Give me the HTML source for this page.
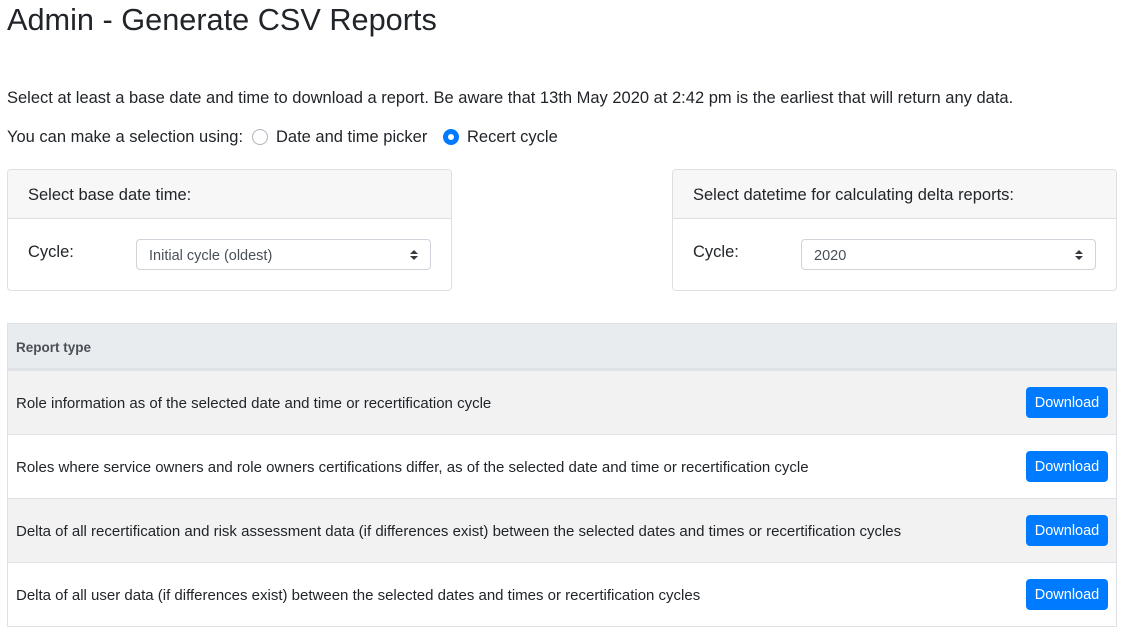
<!DOCTYPE html>
<html><head><style>
*{box-sizing:border-box;margin:0;padding:0}
body{width:1125px;height:634px;overflow:hidden;background:#fff;font-family:"Liberation Sans",Arial,sans-serif;color:#212529;position:relative}
.a{position:absolute;white-space:nowrap}
h1{position:absolute;left:7px;top:2px;font-size:30.7px;font-weight:400;color:#212529}
.p{font-size:16.5px}
.radio{position:absolute;width:16px;height:16px;border-radius:50%;border:1px solid #adb5bd;background:#fff}
.radio.on{border:none;background:#007bff}
.radio.on:after{content:"";position:absolute;left:5px;top:5px;width:6px;height:6px;border-radius:50%;background:#fff}
.card{position:absolute;border:1px solid #dfdfdf;border-radius:4px;background:#fff;overflow:hidden}
.ch{height:49px;background:#f7f7f7;border-bottom:1px solid #dfdfdf;font-size:16.5px;padding:16px 20px}
.sel{position:absolute;height:31px;border:1px solid #ced4da;border-radius:4px;font-size:14.5px;color:#495057;padding:8px 12px 6px}
.sel:after{content:"";position:absolute;right:12px;top:10px;border-left:4px solid transparent;border-right:4px solid transparent;border-bottom:4px solid #343a40}
.sel:before{content:"";position:absolute;right:12px;top:16px;border-left:4px solid transparent;border-right:4px solid transparent;border-top:4px solid #343a40}
.tbl{position:absolute;left:7px;top:323px;width:1110px;border:1px solid #dee2e6}
.th{height:46px;background:#e9ecef;border-bottom:2px solid #dee2e6;font-size:13.5px;font-weight:bold;color:#495057;padding:16px 8px}
.row{height:64px;border-top:1px solid #dee2e6;position:relative;font-size:15px;padding:24px 8px 0}
.row:first-of-type{border-top:none}
.row.g{background:#f2f2f2}
.btn{position:absolute;left:1018px;top:16px;width:82px;height:31px;background:#007bff;color:#fff;border-radius:4px;font-size:14.5px;text-align:center;line-height:33px}
</style></head><body>
<h1>Admin - Generate CSV Reports</h1>
<div class="a p" style="left:7px;top:89px">Select at least a base date and time to download a report. Be aware that 13th May 2020 at 2:42 pm is the earliest that will return any data.</div>
<div class="a p" style="left:7px;top:128px">You can make a selection using:</div>
<div class="radio" style="left:252px;top:129px"></div>
<div class="a p" style="left:276px;top:128px">Date and time picker</div>
<div class="radio on" style="left:443px;top:129px"></div>
<div class="a p" style="left:467px;top:128px">Recert cycle</div>

<div class="card" style="left:7px;top:169px;width:445px;height:122px">
<div class="ch">Select base date time:</div>
<div class="a p" style="left:20px;top:73px">Cycle:</div>
<div class="sel" style="left:128px;top:69px;width:295px">Initial cycle (oldest)</div>
</div>
<div class="card" style="left:672px;top:169px;width:445px;height:122px">
<div class="ch">Select datetime for calculating delta reports:</div>
<div class="a p" style="left:20px;top:73px">Cycle:</div>
<div class="sel" style="left:128px;top:69px;width:295px">2020</div>
</div>

<div class="tbl">
<div class="th">Report type</div>
<div class="row g">Role information as of the selected date and time or recertification cycle<div class="btn">Download</div></div>
<div class="row">Roles where service owners and role owners certifications differ, as of the selected date and time or recertification cycle<div class="btn">Download</div></div>
<div class="row g">Delta of all recertification and risk assessment data (if differences exist) between the selected dates and times or recertification cycles<div class="btn">Download</div></div>
<div class="row">Delta of all user data (if differences exist) between the selected dates and times or recertification cycles<div class="btn">Download</div></div>
</div>
</body></html>
